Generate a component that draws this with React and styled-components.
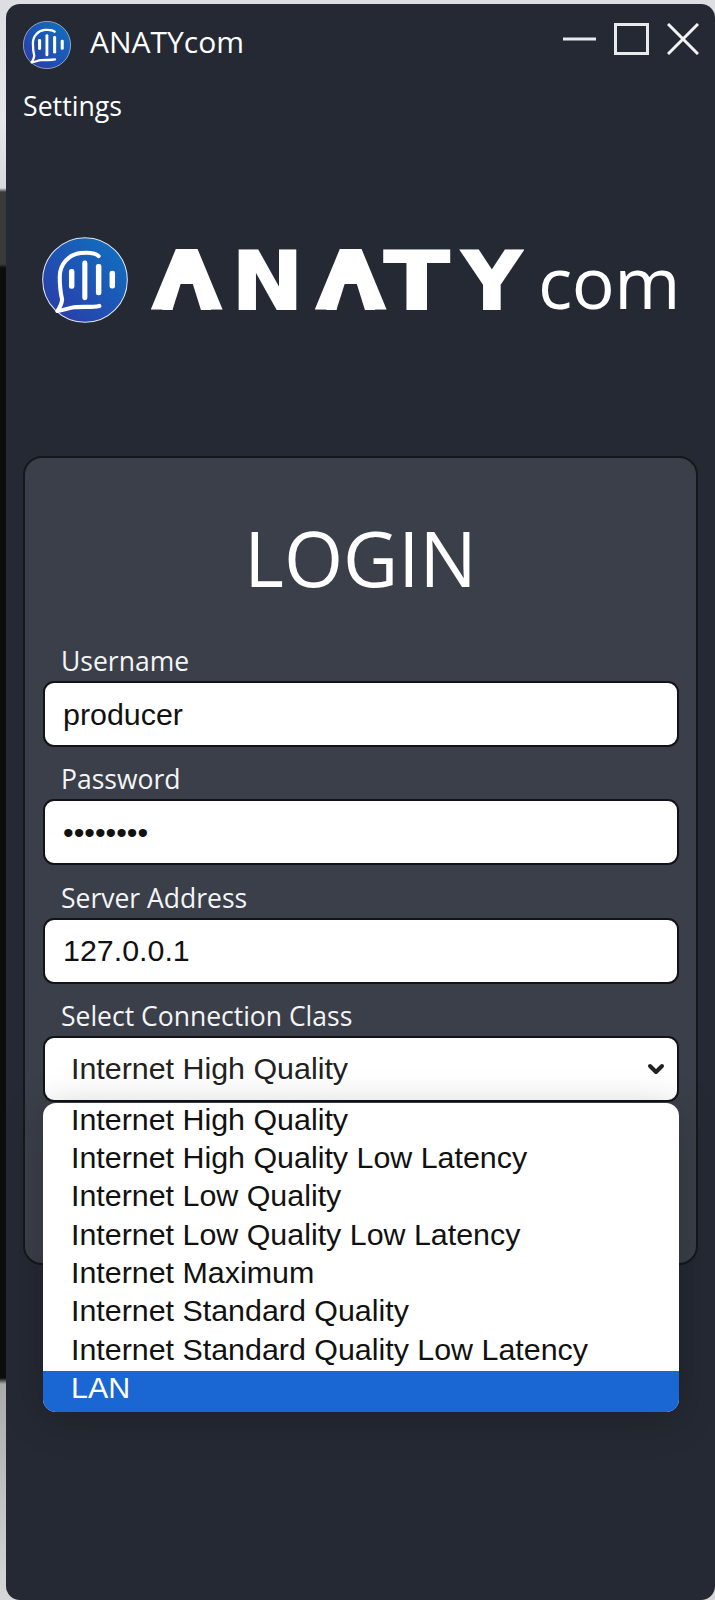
import React from "react";
import styled, { createGlobalStyle } from "styled-components";
import { ChevronDown } from "lucide-react";

const Global = createGlobalStyle`
  html, body { margin: 0; padding: 0; }
  body { width: 715px; height: 1600px; overflow: hidden; font-family: "Open Sans", sans-serif; }
`;

const Desktop = styled.div`
  width: 715px;
  height: 1600px;
  box-sizing: border-box;
  padding: 4px 0 0 6px;
  background: linear-gradient(
    to bottom,
    #dcdee2 0,
    #e6e7e8 120px,
    #d8d9da 188px,
    #3a3b39 192px,
    #3a3b39 264px,
    #0b0d0b 268px,
    #0b0d0b 1378px,
    #a9aaa9 1384px,
    #d6d7d8 1600px
  );
`;

const Window = styled.div`
  width: 709px;
  height: 1596px;
  border-radius: 14px;
  background: #252933;
  color: #fff;
  display: flex;
  flex-direction: column;
  overflow: hidden;
`;

const TitleBar = styled.header`
  display: flex;
  align-items: flex-start;
  justify-content: space-between;
  padding: 17px 16px 0 17px;
`;

const TitleGroup = styled.div`
  display: flex;
  align-items: center;
  gap: 19px;
`;

const TitleText = styled.span`
  font-size: 30px;
  line-height: 40px;
  padding-bottom: 6px;
`;

const Controls = styled.div`
  display: flex;
  gap: 18px;
  padding-top: 2px;
`;

const MenuItem = styled.div`
  font-size: 26.7px;
  line-height: 34px;
  margin: 20px 0 0 17px;
`;

const Brand = styled.div`
  display: flex;
  align-items: center;
  margin: 112px 0 0 36px;
`;

const Wordmark = styled.div`
  display: flex;
  align-items: baseline;
  margin: 3px 0 0 24px;
  line-height: 88px;
  height: 86px;
`;

const Heavy = styled.span`
  font-family: "DejaVu Sans", sans-serif;
  font-weight: 700;
  font-size: 80px;
  color: #fff;
  -webkit-text-stroke: 2px #fff;
  display: inline-block;
  position: relative;
  margin-right: ${(p) => p.$gap}px;
  transform: scaleX(${(p) => p.$sx});
  transform-origin: left center;
  width: ${(p) => p.$w}px;

  ${(p) =>
    p.$notch &&
    `&::before {
      content: "";
      position: absolute;
      left: 9px;
      width: 44px;
      bottom: 16px;
      height: 46px;
      background: #fff;
      clip-path: polygon(40% 0, 60% 0, 100% 100%, 0 100%);
    }
    &::after {
      content: "";
      position: absolute;
      left: 18px;
      width: 26px;
      bottom: 15px;
      height: 27px;
      background: #252933;
      clip-path: polygon(29% 0, 71% 0, 100% 100%, 0 100%);
    }`}
`;

const Com = styled.span`
  font-size: 71.5px;
  font-weight: 530;
  color: #fff;
  margin-left: 14px;
  letter-spacing: -0.5px;
`;

const Card = styled.section`
  box-sizing: border-box;
  width: 675px;
  margin: 132px 0 0 17px;
  padding: 56px 18px 148px;
  border: 2px solid #14171c;
  border-radius: 19px;
  background: #3b3f49;
  display: flex;
  flex-direction: column;
`;

const Heading = styled.h1`
  margin: 0 0 40px;
  text-align: center;
  font-size: 76px;
  line-height: 88px;
  font-weight: 400;
  color: #fff;
`;

const Field = styled.div`
  position: relative;
  display: flex;
  flex-direction: column;
  height: 118.3px;
`;

const Label = styled.label`
  font-size: 26.5px;
  line-height: 39px;
  color: #f4f5f6;
  margin-left: 18px;
`;

const Input = styled.input`
  box-sizing: border-box;
  height: 66px;
  width: 636px;
  padding: 0 18px;
  border: 2px solid #111318;
  border-radius: 11px;
  background: #fff;
  color: #111;
  font-family: "Liberation Sans", Arial, sans-serif;
  font-size: 30.4px;
  outline: none;
`;

const SelectBox = styled.div`
  box-sizing: border-box;
  height: 66px;
  width: 636px;
  padding: 0 9px 0 26px;
  border: 2px solid #111318;
  border-radius: 11px;
  background: #fff;
  color: #222;
  font-family: "Liberation Sans", Arial, sans-serif;
  font-size: 30.4px;
  display: flex;
  align-items: center;
  justify-content: space-between;
`;

const Listbox = styled.ul`
  position: absolute;
  top: 106px;
  left: 0;
  width: 636px;
  margin: 0;
  padding: 0;
  list-style: none;
  border-radius: 13px;
  overflow: hidden;
  background: #fff;
  box-shadow: 0 6px 40px rgba(0, 0, 0, 0.22);
  font-family: "Liberation Sans", Arial, sans-serif;
  font-size: 30.4px;
`;

const Option = styled.li`
  height: ${(p) => (p.$selected ? "41px" : "38.3px")};
  line-height: 32px;
  padding-left: 28px;
  color: ${(p) => (p.$selected ? "#fff" : "#111")};
  background: ${(p) => (p.$selected ? "#1a66d2" : "transparent")};
`;

function LogoMark({ size }) {
  return (
    <svg width={size} height={size} viewBox="68 55 252 252" aria-label="logo">
      <defs>
        <linearGradient id="logoFill" x1="1" y1="0" x2="0" y2="1">
          <stop offset="0" stopColor="#0e74c2" />
          <stop offset="1" stopColor="#2d37a6" />
        </linearGradient>
      </defs>
      <circle cx="194" cy="181" r="124" fill="url(#logoFill)" stroke="#dfe6f3" strokeWidth="3" />
      <path
        d="M234 111 C226 103 205 100 182 102 C146 106 120 134 120 172 C120 195 122 218 127 238 C126 250 120 262 113 272 C130 270 146 263 162 261 C186 258 214 262 236 257"
        fill="none"
        stroke="#fff"
        strokeWidth="12"
        strokeLinecap="round"
        strokeLinejoin="round"
      />
      <g fill="#fff">
        <rect x="147" y="149" width="16" height="58" rx="7" />
        <rect x="186" y="124" width="15" height="116" rx="7" />
        <rect x="226" y="134" width="16" height="92" rx="7" />
        <rect x="266" y="154" width="16" height="52" rx="7" />
      </g>
    </svg>
  );
}

function WindowGlyphs() {
  return (
    <Controls>
      <svg width="33" height="32" viewBox="0 0 33 32">
        <line x1="0" y1="16" x2="33" y2="16" stroke="#e9eaec" strokeWidth="3" />
      </svg>
      <svg width="35" height="32" viewBox="0 0 35 32">
        <rect x="1.5" y="1.5" width="32" height="29" fill="none" stroke="#e9eaec" strokeWidth="3" />
      </svg>
      <svg width="32" height="32" viewBox="0 0 32 32">
        <path d="M1 1 L31 31 M31 1 L1 31" stroke="#f2f3f4" strokeWidth="3" fill="none" />
      </svg>
    </Controls>
  );
}

const options = [
  "Internet High Quality",
  "Internet High Quality Low Latency",
  "Internet Low Quality",
  "Internet Low Quality Low Latency",
  "Internet Maximum",
  "Internet Standard Quality",
  "Internet Standard Quality Low Latency",
  "LAN",
];

export default function App() {
  return (
    <Desktop>
      <Global />
      <Window>
        <TitleBar>
          <TitleGroup>
            <LogoMark size={48} />
            <TitleText>ANATYcom</TitleText>
          </TitleGroup>
          <WindowGlyphs />
        </TitleBar>
        <MenuItem>Settings</MenuItem>
        <Brand>
          <LogoMark size={86} />
          <Wordmark>
            <Heavy $w={68} $gap={12} $sx={1.12} $notch>A</Heavy>
            <Heavy $w={60} $gap={24} $sx={1.06}>N</Heavy>
            <Heavy $w={69} $gap={-1} $sx={1.12} $notch>A</Heavy>
            <Heavy $w={61} $gap={17} $sx={1.2}>T</Heavy>
            <Heavy $w={59} $gap={3} $sx={1.03}>Y</Heavy>
            <Com>com</Com>
          </Wordmark>
        </Brand>
        <Card>
          <Heading>LOGIN</Heading>
          <Field>
            <Label>Username</Label>
            <Input type="text" readOnly value="producer" />
          </Field>
          <Field>
            <Label>Password</Label>
            <Input type="password" readOnly value="producer" />
          </Field>
          <Field>
            <Label>Server Address</Label>
            <Input type="text" readOnly value="127.0.0.1" />
          </Field>
          <Field>
            <Label>Select Connection Class</Label>
            <SelectBox>
              <span>Internet High Quality</span>
              <ChevronDown size={24} strokeWidth={4} color="#222" />
            </SelectBox>
            <Listbox>
              {options.map((o) => (
                <Option key={o} $selected={o === "LAN"}>{o}</Option>
              ))}
            </Listbox>
          </Field>
        </Card>
      </Window>
    </Desktop>
  );
}
